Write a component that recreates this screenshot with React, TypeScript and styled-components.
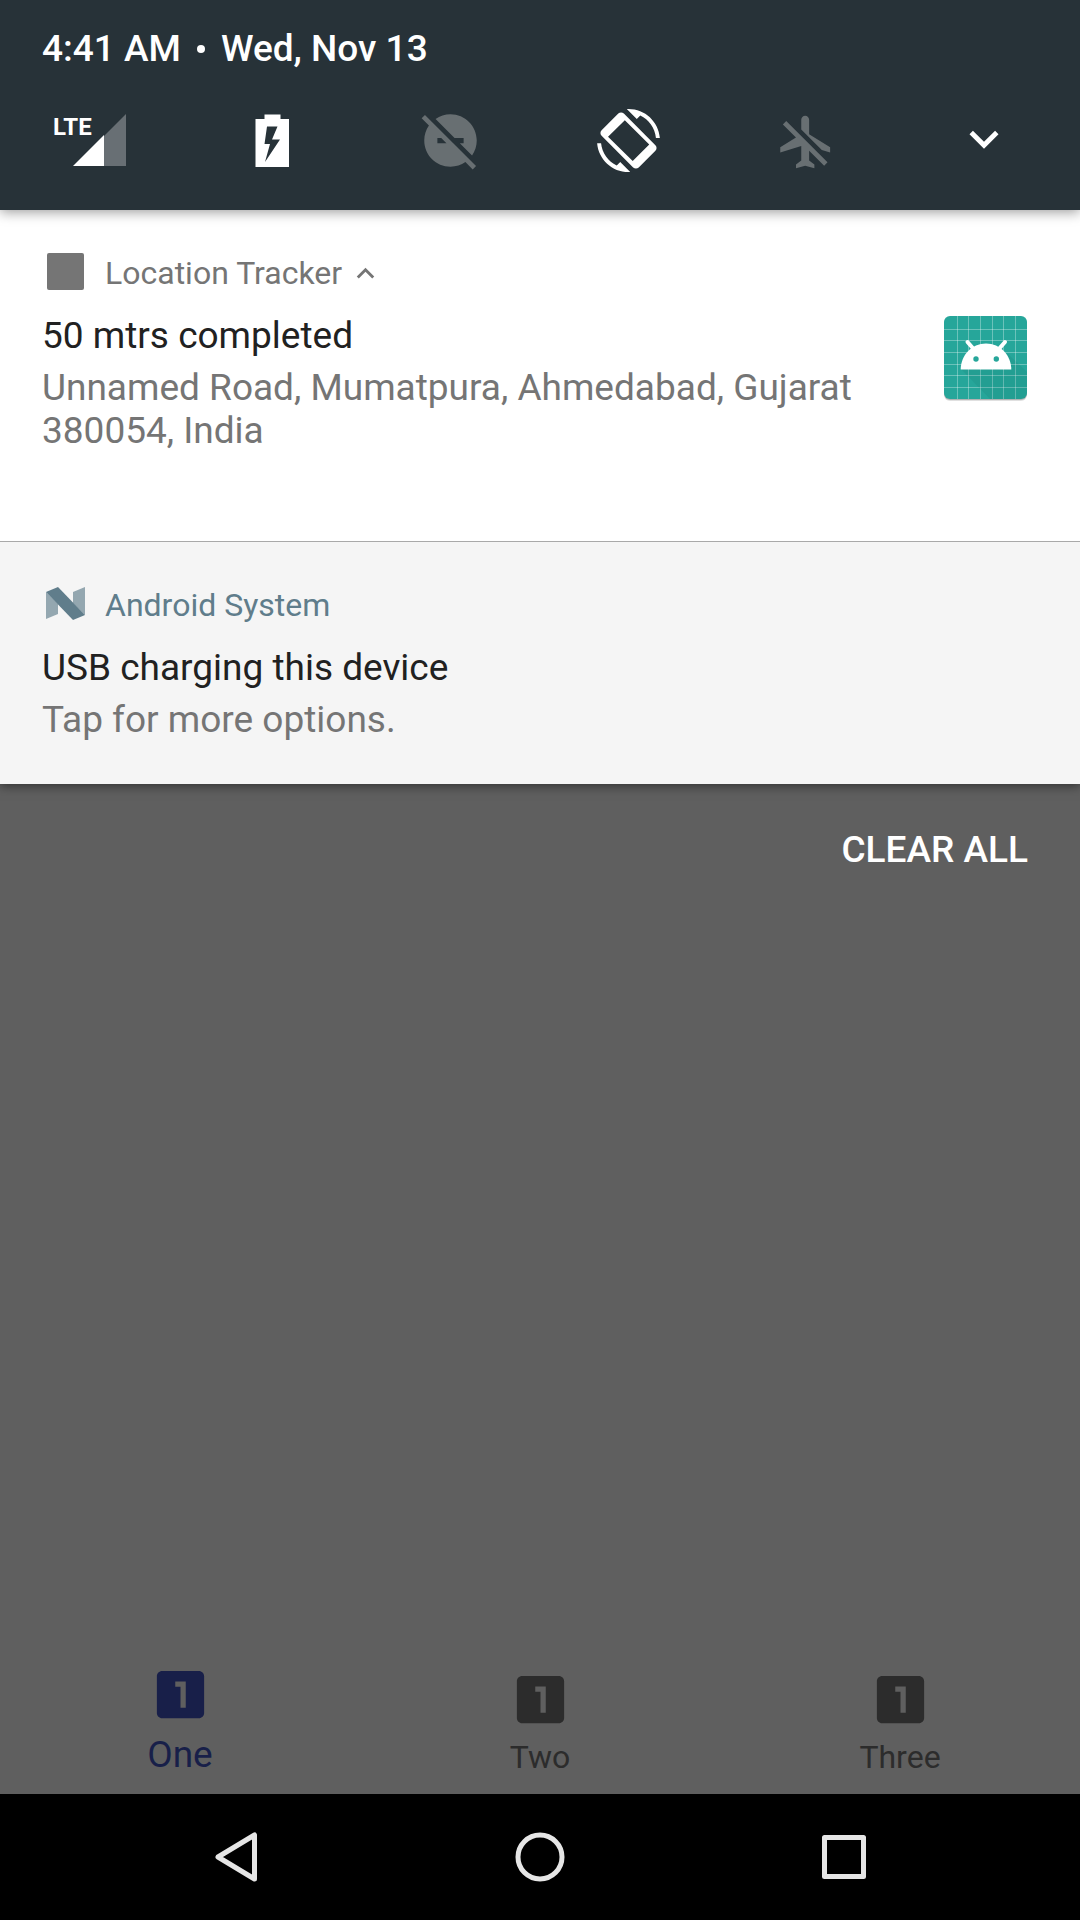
import React from "react";
import styled, { createGlobalStyle } from "styled-components";

const GlobalStyle = createGlobalStyle`
  *, *::before, *::after { box-sizing: border-box; }
  body {
    margin: 0;
    background: #5f5f5f;
    font-family: Roboto, "Noto Sans", sans-serif;
  }
  h2, p { margin: 0; font-weight: 400; }
  svg { display: block; flex: none; }
`;

const Screen = styled.div`
  display: flex;
  flex-direction: column;
  min-height: 100vh;
  background: #5f5f5f;
`;

const PlainButton = styled.button`
  display: flex;
  align-items: center;
  justify-content: center;
  padding: 0;
  border: 0;
  background: none;
  color: inherit;
  font: inherit;
  cursor: pointer;
`;

const QuickHeader = styled.header`
  position: relative;
  padding-top: 27px;
  background: #273238;
  color: #fff;
  box-shadow: 0 2px 12px rgba(0, 0, 0, 0.4);
`;

const Clock = styled.div`
  display: flex;
  gap: 16px;
  padding: 0 42px;
  font-size: 37px;
  line-height: 43px;
  font-weight: 500;
`;

const Dot = styled.span`
  align-self: center;
  width: 8px;
  height: 8px;
  border-radius: 50%;
  background: #fff;
`;

const QuickTiles = styled.div`
  display: flex;
  height: 140px;
  padding: 0 7px 0 5px;
`;

const QuickTile = styled(PlainButton)<{ $off?: boolean }>`
  flex: 1;
  color: ${(p) => (p.$off ? "#686f72" : "#fff")};
`;

const Card = styled.article<{ $tone: string; $bottom: number }>`
  padding: 39px 42px ${(p) => p.$bottom}px;
  background: ${(p) => p.$tone};
`;

const Stack = styled.main`
  display: grid;
  gap: 1px;
  background: #a9a9a9;
  box-shadow: 0 2px 10px rgba(0, 0, 0, 0.5);
`;

const CardHeader = styled.div<{ $color: string }>`
  display: flex;
  align-items: center;
  height: 48px;
  color: ${(p) => p.$color};
`;

const AppName = styled.span`
  margin: 0 6px 0 15px;
  font-size: 32px;
  line-height: 38px;
`;

const CardBody = styled.div`
  display: flex;
  justify-content: space-between;
  gap: 21px;
  margin-top: 17px;
  padding-right: 10px;
`;

const Title = styled.h2`
  margin-bottom: 9px;
  color: #212121;
  font-size: 37px;
  line-height: 43px;
`;

const Detail = styled.p`
  color: #757575;
  font-size: 37px;
  line-height: 43px;
`;

const Actions = styled.div`
  display: flex;
  flex: 1;
  align-items: flex-start;
  justify-content: flex-end;
  padding: 44px 52px;
`;

const ClearButton = styled(PlainButton)`
  color: #fff;
  font-size: 37px;
  line-height: 43px;
  font-weight: 500;
`;

const Tabs = styled.nav`
  display: flex;
  height: 147px;
`;

const Tab = styled.a<{ $active?: boolean }>`
  display: flex;
  flex: 1;
  flex-direction: column;
  align-items: center;
  justify-content: flex-end;
  gap: 7px;
  padding-bottom: 18px;
  color: ${(p) => (p.$active ? "#181f49" : "#2c2c2c")};
  font-size: ${(p) => (p.$active ? 37 : 32)}px;
  line-height: ${(p) => (p.$active ? 43 : 38)}px;
  text-decoration: none;
`;

const SystemBar = styled.nav`
  display: grid;
  grid-template-columns: repeat(3, 1fr);
  height: 126px;
  padding: 0 84px;
  background: #000;
  color: #e6e6e6;
`;

const SignalIcon = () => (
  <svg width="84" height="64" viewBox="52 109 84 64" aria-hidden="true">
    <text x="53" y="136" fill="#fff" fontFamily='"Liberation Sans Narrow", Roboto, sans-serif' fontWeight="700" fontSize="24">
      LTE
    </text>
    <path d="M104 137 126 115v52h-22z" fill="#fff" opacity="0.3" />
    <path d="M73 167 104 136V167z" fill="#fff" />
  </svg>
);

const BatteryIcon = () => (
  <svg width="63" height="63" viewBox="241 109 63 63" aria-hidden="true">
    <path
      fill="currentColor"
      fillRule="evenodd"
      d="M264.500 114.500h16v4.500h8.500v48h-33.500v-48h9zM267 126.500l-2.500 17.500h5.500l-5 18 15-22.500h-8l5.500-13z"
    />
  </svg>
);

const DisturbOffIcon = () => (
  <svg width="63" height="63" viewBox="0 0 24 24" fill="currentColor" aria-hidden="true">
    <path d="M17 11v2h-1.460l4.680 4.680C21.340 16.070 22 14.110 22 12c0-5.520-4.480-10-10-10-2.110 0-4.070.66-5.680 1.780L13.540 11H17zM2.270 2.270L1 3.540l2.780 2.780C2.660 7.930 2 9.890 2 12c0 5.520 4.480 10 10 10 2.110 0 4.070-.66 5.680-1.780L20.460 23l1.270-1.270L2.270 2.270zM7 13v-2h1.460l2 2H7z" />
  </svg>
);

const RotateIcon = () => (
  <svg width="63" height="63" viewBox="0 0 24 24" fill="currentColor" aria-hidden="true">
    <path d="M16.480 2.520c3.270 1.550 5.610 4.720 5.970 8.480h1.500C23.440 4.840 18.290 0 12 0l-.66.03 3.810 3.810 1.330-1.320zM7.520 21.480C4.250 19.940 1.910 16.760 1.550 13H.05C.56 19.160 5.710 24 12 24l.66-.03-3.810-3.810-1.330 1.320z" />
    <path
      fillRule="evenodd"
      d="M10.230 1.750c-.59-.59-1.540-.59-2.120 0L1.750 8.110c-.59.59-.59 1.540 0 2.120l12.020 12.020c.59.59 1.540.59 2.120 0l6.360-6.360c.59-.59.59-1.540 0-2.120zM10.600 4.300 4.200 10.600l9.400 9.200 6.300-6.300z"
    />
  </svg>
);

const AirplaneOffIcon = () => (
  <svg width="63" height="63" viewBox="0 -0.6 24 24" fill="currentColor" aria-hidden="true">
    <path d="M13 9V3.500c0-.83-.67-1.500-1.500-1.500S10 2.670 10 3.500v3.680l7.830 7.830L21 16v-2l-8-5zM3 5.270l4.990 4.990L2 14v2l8-2.500V19l-2 1.500V22l3.500-1 3.500 1v-1.500L13 19v-3.730L18.730 21 20 19.730 4.270 4 3 5.270z" />
  </svg>
);

const ExpandIcon = () => (
  <svg width="58" height="58" viewBox="0 0.4 24 24" fill="currentColor" aria-hidden="true">
    <path d="M16.590 8.590L12 13.170 7.410 8.590 6 10l6 6 6-6z" />
  </svg>
);

const CollapseIcon = () => (
  <svg width="35" height="35" viewBox="0 0 24 24" fill="currentColor" aria-hidden="true">
    <path d="M12 8l-6 6 1.410 1.410L12 10.830l4.590 4.580L18 14z" />
  </svg>
);

const TrackerIcon = () => (
  <svg width="48" height="48" viewBox="0 0 48 48" fill="currentColor" aria-hidden="true">
    <rect x="5" y="4" width="37" height="37" rx="2" />
  </svg>
);

const NougatIcon = () => (
  <svg width="48" height="48" viewBox="0 0 48 48" fill="currentColor" aria-hidden="true">
    <path d="M4 11l12 12v10L4 38z" opacity="0.65" />
    <path d="M31 11l12-5v28L31 22z" opacity="0.65" />
    <path d="M4 11l12-5 27 28-12 5z" />
  </svg>
);

const gridLines = [13, 24, 36, 48, 59, 71];

const LauncherIcon = () => (
  <svg width="84" height="90" viewBox="0 -2 84 90" role="img" aria-label="Location Tracker">
    <defs>
      <clipPath id="tile">
        <rect width="83" height="83" rx="6" />
      </clipPath>
    </defs>
    <rect y="2" width="83" height="83" rx="6" fill="#000" opacity="0.12" />
    <rect y="1" width="83" height="83" rx="6" fill="#000" opacity="0.2" />
    <rect width="83" height="83" rx="6" fill="#26a69a" />
    <g clipPath="url(#tile)">
      {gridLines.map((p) => (
        <path key={p} d={`M${p}.500 0v84M0 ${p}.500h84`} stroke="#fff" strokeOpacity="0.32" />
      ))}
      <path d="M17 53 47 84h37V57L64 38z" fill="#00463c" opacity="0.08" />
    </g>
    <path d="M16.700 53.500c0-14 11-26 25.300-26s25.300 12 25.300 26z" fill="#fff" />
    <path d="M23.500 26l7 8M61 26l-7 8" stroke="#fff" strokeWidth="4" strokeLinecap="round" />
    <circle cx="32" cy="43" r="2.700" fill="#26a69a" />
    <circle cx="52.300" cy="43" r="2.700" fill="#26a69a" />
  </svg>
);

const LooksOneIcon = () => (
  <svg width="63" height="63" viewBox="0 0 24 24" fill="currentColor" aria-hidden="true">
    <path d="M19 3H5c-1.100 0-2 .9-2 2v14c0 1.100.9 2 2 2h14c1.100 0 2-.9 2-2V5c0-1.100-.9-2-2-2zm-5 14h-2V9h-2V7h4v10z" />
  </svg>
);

const BarIcon = ({ children }: { children: React.ReactNode }) => (
  <svg width="72" height="72" viewBox="0 0 72 72" fill="none" stroke="currentColor" strokeWidth="5" strokeLinejoin="round" aria-hidden="true">
    {children}
  </svg>
);

export default function App() {
  return (
    <>
      <GlobalStyle />
      <Screen>
        <QuickHeader>
          <Clock>
            <span>4:41 AM</span>
            <Dot />
            <span>Wed, Nov 13</span>
          </Clock>
          <QuickTiles>
            <QuickTile aria-label="Mobile data"><SignalIcon /></QuickTile>
            <QuickTile aria-label="Battery"><BatteryIcon /></QuickTile>
            <QuickTile $off aria-label="Do not disturb"><DisturbOffIcon /></QuickTile>
            <QuickTile aria-label="Auto-rotate"><RotateIcon /></QuickTile>
            <QuickTile $off aria-label="Airplane mode"><AirplaneOffIcon /></QuickTile>
            <QuickTile aria-label="Open quick settings"><ExpandIcon /></QuickTile>
          </QuickTiles>
        </QuickHeader>

        <Stack>
          <Card $tone="#fff" $bottom={89}>
            <CardHeader $color="#757575">
              <TrackerIcon />
              <AppName>Location Tracker</AppName>
              <PlainButton aria-label="Collapse"><CollapseIcon /></PlainButton>
            </CardHeader>
            <CardBody>
              <div>
                <Title>50 mtrs completed</Title>
                <Detail>Unnamed Road, Mumatpura, Ahmedabad, Gujarat 380054, India</Detail>
              </div>
              <LauncherIcon />
            </CardBody>
          </Card>
          <Card $tone="#f5f5f5" $bottom={43}>
            <CardHeader $color="#607d8b">
              <NougatIcon />
              <AppName>Android System</AppName>
            </CardHeader>
            <CardBody>
              <div>
                <Title>USB charging this device</Title>
                <Detail>Tap for more options.</Detail>
              </div>
            </CardBody>
          </Card>
        </Stack>

        <Actions>
          <ClearButton>CLEAR ALL</ClearButton>
        </Actions>

        <Tabs aria-label="Sections">
          <Tab href="#one" $active aria-current="page"><LooksOneIcon />One</Tab>
          <Tab href="#two"><LooksOneIcon />Two</Tab>
          <Tab href="#three"><LooksOneIcon />Three</Tab>
        </Tabs>

        <SystemBar aria-label="System">
          <PlainButton aria-label="Back">
            <BarIcon><path d="M18 36 54.500 14v44z" /></BarIcon>
          </PlainButton>
          <PlainButton aria-label="Home">
            <BarIcon><circle cx="36" cy="36" r="22" /></BarIcon>
          </PlainButton>
          <PlainButton aria-label="Recent apps">
            <BarIcon><rect x="16.500" y="16.500" width="39" height="39" /></BarIcon>
          </PlainButton>
        </SystemBar>
      </Screen>
    </>
  );
}
